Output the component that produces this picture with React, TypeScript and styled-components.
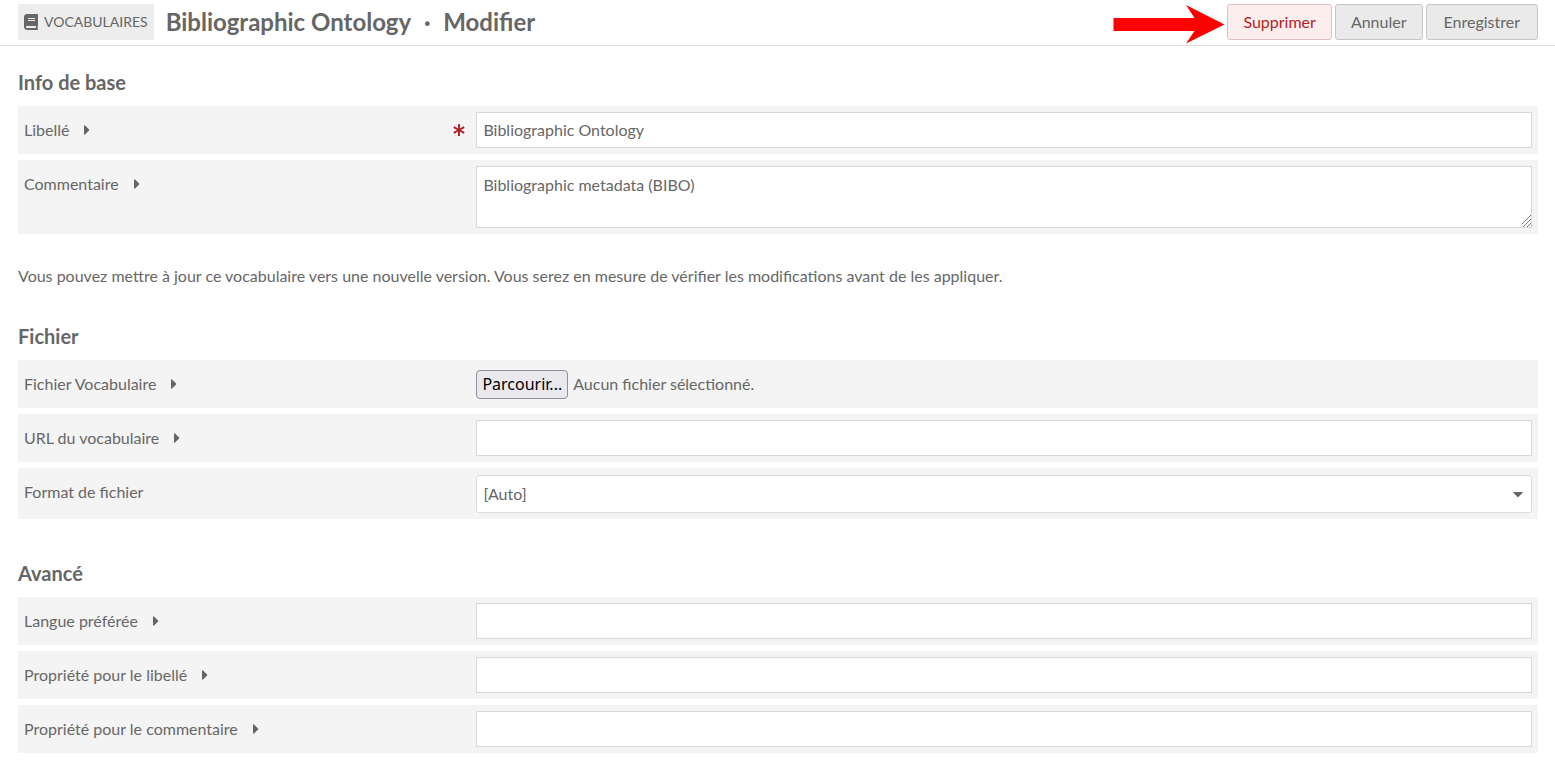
import React, { useRef, useState } from "react";
import styled, { createGlobalStyle } from "styled-components";
import { FaAsterisk, FaBook, FaCaretDown, FaCaretRight } from "react-icons/fa";

const colors = {
  text: "#676767",
  strong: "#666666",
  border: "#d8d8d8",
  field: "#f4f4f4",
  red: "#b11f24",
};

const GlobalStyle = createGlobalStyle`
  *, *::before, *::after { box-sizing: border-box; }
  body {
    margin: 0;
    background: #fff;
    color: ${colors.text};
    font: 16px/24px Lato, "Open Sans", sans-serif;
  }
`;

const Header = styled.header`
  display: flex;
  align-items: center;
  justify-content: space-between;
  padding: 4px 17px 5px 18px;
  border-bottom: 1px solid #dfdfdf;
`;

const Title = styled.h1`
  display: flex;
  align-items: center;
  margin: 0;
  font-size: 24px;
  line-height: 36px;
  font-weight: 700;
  color: ${colors.strong};
`;

const SectionLink = styled.a`
  display: flex;
  align-items: center;
  gap: 6px;
  padding: 0 6px;
  margin-right: 12px;
  background: #ededed;
  color: ${colors.strong};
  font-size: 14px;
  font-weight: 400;
  text-transform: uppercase;
  text-decoration: none;

  svg {
    width: 14px;
    height: 16px;
  }
`;

const Separator = styled.span`
  width: 32px;
  text-align: center;
`;

const Actions = styled.div`
  position: relative;
  display: flex;
  gap: 3px;
`;

const Pointer = styled.svg`
  position: absolute;
  top: 1px;
  right: 100%;
  width: 114px;
  height: 39px;
`;

const ActionButton = styled.button<{ $danger?: boolean }>`
  height: 36px;
  padding: 0 15px;
  border: 1px solid ${(p) => (p.$danger ? "#e5c0c1" : "#c6c6c6")};
  border-radius: 3px;
  background: ${(p) => (p.$danger ? "#fdeeee" : "#eaeaea")};
  color: ${(p) => (p.$danger ? colors.red : colors.text)};
  font: inherit;
  cursor: pointer;

  &:last-child { padding: 0 17px; }
`;

const Form = styled.form`
  padding: 24px 17px 24px 18px;
`;

const Section = styled.section`
  & + & { margin-top: 42px; }
`;

const SectionTitle = styled.h2`
  margin: 0 0 12px;
  font-size: 20px;
  line-height: 24px;
  font-weight: 700;
  color: ${colors.strong};
`;

const Fields = styled.div`
  display: grid;
  gap: 6px;
`;

const FieldRow = styled.div`
  display: grid;
  grid-template-columns: 3fr 7fr;
  min-height: 48px;
  padding: 6px;
  background: ${colors.field};
`;

const FieldMeta = styled.div`
  display: flex;
  align-items: center;
  height: 36px;
  padding-right: 11px;
`;

const HelpToggle = styled.button`
  display: flex;
  padding: 0;
  margin-left: 15px;
  border: 0;
  background: none;
  color: ${colors.strong};
  font-size: 16px;
  cursor: pointer;

  svg { width: 6px; }
`;

const Required = styled.span`
  display: flex;
  margin-left: auto;
  color: ${colors.red};
  font-size: 12px;
`;

const TextInput = styled.input`
  display: block;
  width: 100%;
  height: 36px;
  padding: 0 6px 2px;
  border: 1px solid ${colors.border};
  background: #fff;
  color: ${colors.text};
  font: inherit;
`;

const TextArea = styled.textarea`
  display: block;
  width: 100%;
  height: 62px;
  padding: 6px;
  border: 1px solid ${colors.border};
  background: #fff;
  color: ${colors.text};
  font: inherit;
  resize: vertical;

  &::-webkit-resizer {
    background:
      linear-gradient(135deg, #fff 60%, transparent 60%),
      repeating-linear-gradient(135deg, #777 0 1px, #fff 1px 3px);
  }
`;

const FilePicker = styled.div`
  display: flex;
  align-items: center;
  gap: 5px;
  height: 36px;

  input { display: none; }
`;

const BrowseButton = styled.button`
  height: 29px;
  padding: 0 5px;
  border: 1px solid #8f8f9d;
  border-radius: 4px;
  background: #e9e9ed;
  color: #000;
  font: 16px/24px "Noto Sans", sans-serif;
`;

const SelectBox = styled.div`
  position: relative;
  padding-top: 1px;

  svg {
    position: absolute;
    top: 12px;
    right: 9px;
    width: 10px;
    color: ${colors.strong};
    pointer-events: none;
  }
`;

const Select = styled.select`
  display: block;
  width: 100%;
  height: 38px;
  padding: 0 6px;
  border: 1px solid #dcdcdc;
  border-radius: 3px;
  background: #fff;
  color: ${colors.text};
  font: inherit;
  appearance: none;
`;

const Notice = styled.p`
  margin: 30px 0 36px;
`;

type FieldProps = {
  id: string;
  label: string;
  help?: boolean;
  required?: boolean;
  children: React.ReactNode;
};

function Field({ id, label, help = true, required, children }: FieldProps) {
  return (
    <FieldRow>
      <FieldMeta>
        <label htmlFor={id}>{label}</label>
        {help && (
          <HelpToggle type="button" aria-label="Afficher l'aide">
            <FaCaretRight />
          </HelpToggle>
        )}
        {required && (
          <Required>
            <FaAsterisk />
          </Required>
        )}
      </FieldMeta>
      <div>{children}</div>
    </FieldRow>
  );
}

function FileField({ id }: { id: string }) {
  const input = useRef<HTMLInputElement>(null);
  const [name, setName] = useState("");
  return (
    <FilePicker>
      <input
        ref={input}
        id={id}
        type="file"
        onChange={(e) => setName(e.target.files?.[0]?.name ?? "")}
      />
      <BrowseButton type="button" onClick={() => input.current?.click()}>
        Parcourir...
      </BrowseButton>
      <span>{name || "Aucun fichier sélectionné."}</span>
    </FilePicker>
  );
}

export default function App() {
  return (
    <>
      <GlobalStyle />
      <Header>
        <Title>
          <SectionLink href="#vocabulaires">
            <FaBook />
            Vocabulaires
          </SectionLink>
          <span>Bibliographic Ontology</span>
          <Separator>·</Separator>
          <span>Modifier</span>
        </Title>
        <Actions>
          <Pointer viewBox="0 0 114 39" aria-hidden="true">
            <path d="M0.500 13H81.500L73 0L111.500 19.500L73 38.500L81.500 26H0.500Z" fill="#f00" />
          </Pointer>
          <ActionButton type="button" $danger>Supprimer</ActionButton>
          <ActionButton type="button">Annuler</ActionButton>
          <ActionButton type="submit" form="vocabulary">Enregistrer</ActionButton>
        </Actions>
      </Header>
      <Form id="vocabulary" onSubmit={(e) => e.preventDefault()}>
        <section>
          <SectionTitle>Info de base</SectionTitle>
          <Fields>
            <Field id="label" label="Libellé" required>
              <TextInput id="label" type="text" required defaultValue="Bibliographic Ontology" />
            </Field>
            <Field id="comment" label="Commentaire">
              <TextArea id="comment" defaultValue="Bibliographic metadata (BIBO)" />
            </Field>
          </Fields>
        </section>
        <Notice>
          Vous pouvez mettre à jour ce vocabulaire vers une nouvelle version. Vous serez en mesure
          de vérifier les modifications avant de les appliquer.
        </Notice>
        <Section>
          <SectionTitle>Fichier</SectionTitle>
          <Fields>
            <Field id="file" label="Fichier Vocabulaire">
              <FileField id="file" />
            </Field>
            <Field id="url" label="URL du vocabulaire">
              <TextInput id="url" type="text" />
            </Field>
            <Field id="format" label="Format de fichier" help={false}>
              <SelectBox>
                <Select id="format">
                  <option>[Auto]</option>
                </Select>
                <FaCaretDown />
              </SelectBox>
            </Field>
          </Fields>
        </Section>
        <Section>
          <SectionTitle>Avancé</SectionTitle>
          <Fields>
            <Field id="lang" label="Langue préférée">
              <TextInput id="lang" type="text" />
            </Field>
            <Field id="label-property" label="Propriété pour le libellé">
              <TextInput id="label-property" type="text" />
            </Field>
            <Field id="comment-property" label="Propriété pour le commentaire">
              <TextInput id="comment-property" type="text" />
            </Field>
          </Fields>
        </Section>
      </Form>
    </>
  );
}
